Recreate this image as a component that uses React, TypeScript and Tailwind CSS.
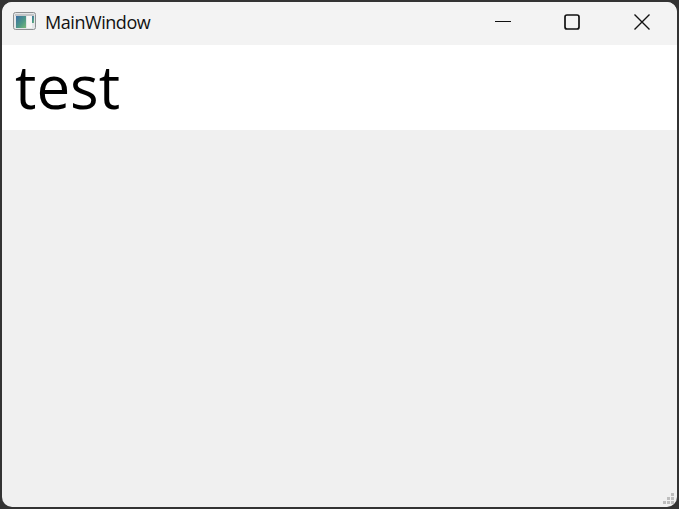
import React from 'react';

const AppIcon: React.FC = () => (
    <svg width="24" height="20" viewBox="0 0 24 20" className="shrink-0 -mt-[3px]">
        <defs>
            <linearGradient id="pane" x1="0" y1="0" x2="1" y2="1">
                <stop offset="0" stopColor="#3b6ea5" />
                <stop offset="0.6" stopColor="#4f9a86" />
                <stop offset="1" stopColor="#7dbb7a" />
            </linearGradient>
        </defs>
        <rect x="0.5" y="0.5" width="22" height="17" rx="2" fill="#e4e6e8" stroke="#8d8f91" />
        <rect x="2" y="2" width="19" height="2" fill="#c4c6c8" />
        <rect x="3" y="4" width="10" height="12" fill="url(#pane)" />
        <rect x="14" y="4" width="5" height="12" fill="#f7f7f5" />
        <rect x="19" y="4" width="2" height="7" fill="url(#pane)" />
    </svg>
);

const ResizeGrip: React.FC = () => (
    <div className="absolute right-[3px] bottom-[3px] grid grid-cols-3 gap-px">
        {[0, 0, 1, 0, 1, 1, 1, 1, 1].map((on, i) => (
            <span key={i} className={`w-[3px] h-[3px] ${on ? 'bg-[#bdbdbd]' : ''}`} />
        ))}
    </div>
);

export default function App() {
    return (
        <div className="w-[679px] h-[509px] overflow-hidden bg-[#333333] p-[2px] font-['Open_Sans','Noto_Sans',sans-serif]">
            <div className="relative flex flex-col h-full overflow-hidden rounded-[10px] bg-[#f0f0f0]">
                <div className="flex items-center h-[43px] bg-[#f3f3f3] shrink-0">
                    <div className="flex items-center pl-[11px] gap-[8px] flex-1">
                        <AppIcon />
                        <span className="text-[18px] leading-none text-[#111111] tracking-[-0.45px] -mt-[4px]">MainWindow</span>
                    </div>
                    <div className="flex items-center h-full">
                        <button className="flex items-center justify-center w-[70px] h-full">
                            <svg width="16" height="16" viewBox="0 0 16 16" className="-mt-[3px] ml-[1px]">
                                <path d="M0 7.5H16" stroke="#111111" strokeWidth="1" />
                            </svg>
                        </button>
                        <button className="flex items-center justify-center w-[70px] h-full">
                            <svg width="16" height="16" viewBox="0 0 16 16" className="-mt-[3px]">
                                <rect x="1" y="1" width="14" height="14" rx="2" fill="none" stroke="#111111" strokeWidth="1.7" />
                            </svg>
                        </button>
                        <button className="flex items-center justify-center w-[70px] h-full">
                            <svg width="16" height="16" viewBox="0 0 16 16" className="-mt-[3px]">
                                <path d="M0.5 0.5L15.5 15.5M15.5 0.5L0.5 15.5" stroke="#111111" strokeWidth="1.4" />
                            </svg>
                        </button>
                    </div>
                </div>
                <div className="flex items-center h-[85px] bg-white pl-[13px] shrink-0">
                    <span className="text-[60px] leading-none text-black -mt-[3px]">test</span>
                </div>
                <div className="flex-1" />
                <ResizeGrip />
            </div>
        </div>
    );
}
